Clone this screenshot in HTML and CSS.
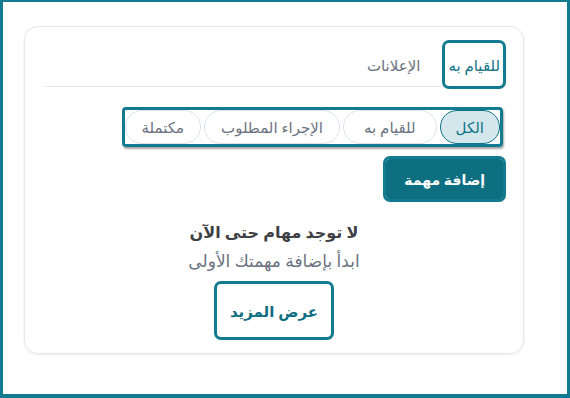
FILE: index.html
```html
<!DOCTYPE html>
<html lang="ar" dir="rtl">

<head>
    <meta charset="utf-8">
    <title>المهام</title>
    <link rel="stylesheet" href="styles.css">
</head>

<body>
    <div class="frame">
        <div class="card">
            <div class="tabs">
                <button class="tab active focus">للقيام به</button>
                <button class="tab">الإعلانات</button>
            </div>
            <div class="filters focus-inset">
                <button class="pill active">الكل</button>
                <button class="pill wide">للقيام به</button>
                <button class="pill">الإجراء المطلوب</button>
                <button class="pill">مكتملة</button>
            </div>
            <div class="actions">
                <button class="add focus">إضافة مهمة</button>
            </div>
            <div class="empty">
                <h3>لا توجد مهام حتى الآن</h3>
                <p>ابدأ بإضافة مهمتك الأولى</p>
                <button class="more focus">عرض المزيد</button>
            </div>
        </div>
    </div>
</body>

</html>
```

FILE: styles.css
```css
html, body {
    margin: 0;
    padding: 0;
}

body {
    font-family: "Noto Sans", "DejaVu Sans", sans-serif;
    color: #374151;
    background: #fff;
}

.frame {
    box-sizing: border-box;
    height: 100vh;
    border: 3px solid #137b8f;
    border-top-width: 2px;
    border-bottom-width: 4px;
    direction: ltr;
    padding: 24px 0 0 21px;
}

.card {
    direction: rtl;
    width: 500px;
    box-sizing: border-box;
    border: 1px solid #e5e7eb;
    border-radius: 14px;
    box-shadow: 0 1px 3px rgba(0, 0, 0, 0.08);
    padding: 16px 20px 16px;
    display: flex;
    flex-direction: column;
}

button {
    font-family: inherit;
    cursor: pointer;
}

.focus {
    outline: 3px solid #137b8f;
    border-radius: 4px;
    box-shadow: 1px 2px 2px rgba(0, 0, 0, 0.35);
}

.focus-inset {
    outline: 3px solid #137b8f;
    outline-offset: -3px;
    border-radius: 4px;
    box-shadow: 1px 2px 2px rgba(0, 0, 0, 0.35);
}

.tabs {
    display: flex;
    gap: 22px;
    border-bottom: 1px solid #e5e7eb;
}

.tab {
    background: none;
    border: none;
    padding: 0 3px;
    height: 43px;
    font-size: 15px;
    color: #6b7280;
}

.tab.active {
    color: #0f7385;
    font-weight: 500;
}

.filters {
    margin-top: 20px;
    display: flex;
    gap: 3px;
    padding: 3px;
    overflow: hidden;
    align-self: flex-start;
}

.pill {
    flex: none;
    height: 34px;
    padding: 0 16px;
    border: 1px solid #dbe3ea;
    border-radius: 17px;
    background: #fff;
    font-size: 15px;
    color: #6b7280;
}

.pill.wide {
    padding: 0 20px;
}

.pill.active {
    background: #d3e7ec;
    border-color: #0f7385;
    color: #0f7385;
    font-weight: 500;
    padding: 0 15px;
}

.actions {
    display: flex;
    margin-top: 12px;
}

.add {
    height: 40px;
    padding: 0 18px;
    border: none;
    background: #0e6f81;
    color: #fff;
    font-size: 14px;
    font-weight: bold;
}

.empty {
    display: flex;
    flex-direction: column;
    align-items: center;
    margin-top: 22px;
}

.empty h3 {
    margin: 0;
    font-size: 16px;
    font-weight: bold;
    color: #3f3f46;
}

.empty p {
    margin: 6px 0 0;
    font-size: 17px;
    color: #6b7280;
}

.more {
    margin-top: 12px;
    height: 53px;
    padding: 0 13px;
    border: none;
    background: #fff;
    color: #0f6e80;
    font-size: 15px;
    font-weight: bold;
}
```
